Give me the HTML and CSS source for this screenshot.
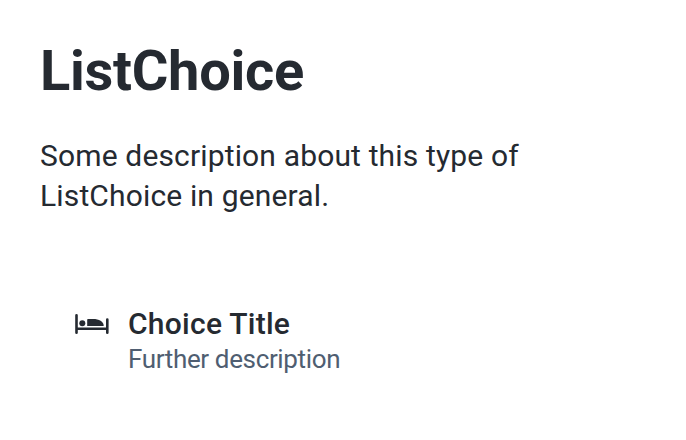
FILE: index.html
```
<!DOCTYPE html>
<html lang="en">
<head>
<meta charset="utf-8">
<title>ListChoice</title>
<link rel="stylesheet" href="styles.css">
</head>
<body>
<main class="page">
  <h1 class="title">ListChoice</h1>
  <p class="description">Some description about this type of ListChoice in general.</p>
  <div class="choice">
    <svg class="choice-icon" viewBox="0 0 34 20" aria-hidden="true">
      <path d="M1.500 1.300v17.400M32.300 5.500v13.200M1.500 14.800h30.800" fill="none" stroke="currentColor" stroke-width="2.600" stroke-linecap="round"/>
      <circle cx="7.300" cy="9.200" r="3"/>
      <path d="M12.200 5.800Q12.200 5 13 5h5c6 0 10.700 2.300 10.700 7H12.200z"/>
    </svg>
    <div class="choice-text">
      <div class="choice-title">Choice Title</div>
      <div class="choice-description">Further description</div>
    </div>
  </div>
</main>
</body>
</html>
```
FILE: styles.css
```
body {
  margin: 0;
  background: #fff;
  color: #252a31;
  font-family: Roboto, "Liberation Sans", sans-serif;
}

.page {
  padding: 39px 40px 40px;
}

.title {
  margin: 0;
  font-size: 56px;
  font-weight: 700;
  letter-spacing: -0.28px;
  line-height: 64px;
}

.description {
  width: 500px;
  margin: 33px 0 0;
  font-size: 30px;
  letter-spacing: 0.15px;
  line-height: 40px;
}

.choice {
  display: flex;
  gap: 19px;
  margin-top: 88px;
  padding-left: 35px;
}

.choice-icon {
  width: 34px;
  height: 20px;
  margin-top: 10px;
  fill: currentColor;
}

.choice-title {
  font-size: 30px;
  font-weight: 500;
  letter-spacing: 0.26px;
  line-height: 40px;
}

.choice-description {
  margin-top: -1px;
  color: #4f5e71;
  font-size: 26px;
  letter-spacing: -0.36px;
  line-height: 32px;
}
```
